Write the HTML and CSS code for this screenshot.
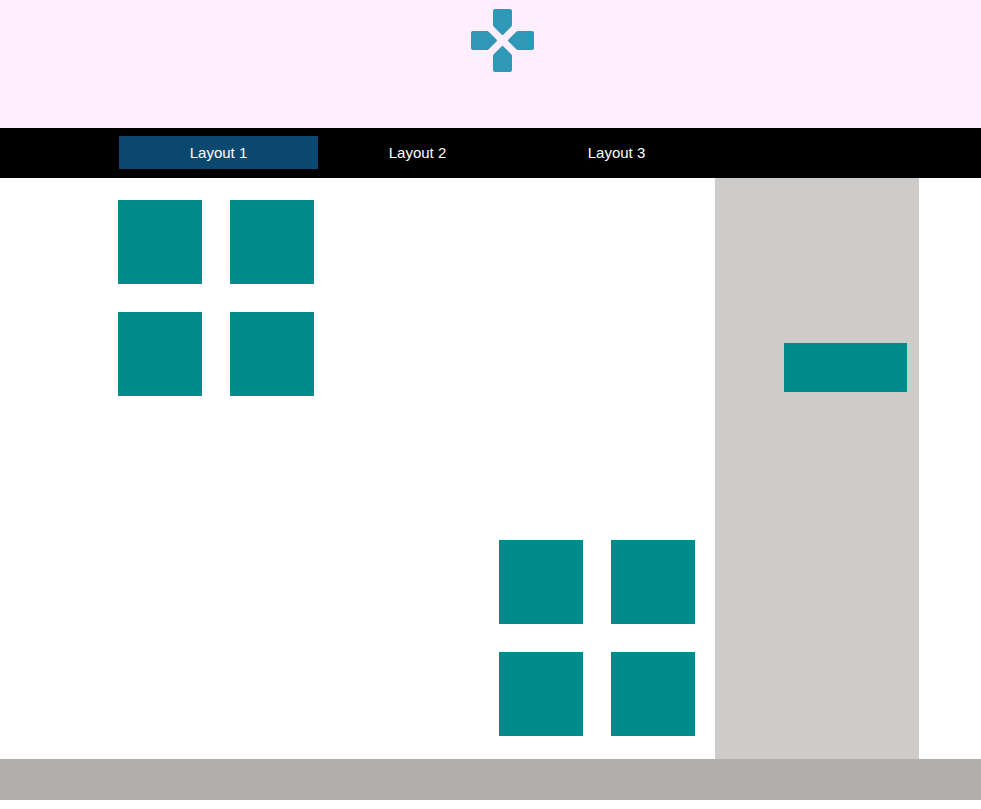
FILE: index.html
```html
<!DOCTYPE html>
<html lang="en">
<head>
  <meta charset="utf-8">
  <title>Layout 1</title>
  <link rel="stylesheet" href="styles.css">
</head>
<body>
  <header class="header">
    <svg class="logo" viewBox="0 0 63 63" role="img" aria-label="Gamepad">
      <g id="pad">
        <path d="M24 0h15q2 0 2 2v14q0 1-1 2l-7.500 7.500q-1 1-2 0L23 18q-1-1-1-2V2q0-2 2-2z"/>
        <path transform="rotate(90 31.500 31.500)" d="M24 0h15q2 0 2 2v14q0 1-1 2l-7.500 7.500q-1 1-2 0L23 18q-1-1-1-2V2q0-2 2-2z"/>
        <path transform="rotate(180 31.500 31.500)" d="M24 0h15q2 0 2 2v14q0 1-1 2l-7.500 7.500q-1 1-2 0L23 18q-1-1-1-2V2q0-2 2-2z"/>
        <path transform="rotate(270 31.500 31.500)" d="M24 0h15q2 0 2 2v14q0 1-1 2l-7.500 7.500q-1 1-2 0L23 18q-1-1-1-2V2q0-2 2-2z"/>
      </g>
    </svg>
  </header>
  <nav class="nav">
    <a class="nav-link active" href="#layout1">Layout 1</a>
    <a class="nav-link" href="#layout2">Layout 2</a>
    <a class="nav-link" href="#layout3">Layout 3</a>
  </nav>
  <div class="page">
    <main class="main">
      <div class="tiles">
        <div class="tile"></div>
        <div class="tile"></div>
        <div class="tile"></div>
        <div class="tile"></div>
      </div>
      <div class="tiles tiles-end">
        <div class="tile"></div>
        <div class="tile"></div>
        <div class="tile"></div>
        <div class="tile"></div>
      </div>
    </main>
    <aside class="sidebar">
      <div class="banner"></div>
    </aside>
  </div>
  <footer class="footer"></footer>
</body>
</html>
```
FILE: styles.css
```css
* {
  box-sizing: border-box;
}

body {
  margin: 0;
  background: #fff;
  font-family: "Liberation Sans", Arial, sans-serif;
  font-size: 15px;
}

.header {
  display: flex;
  justify-content: center;
  align-items: flex-start;
  min-height: 128px;
  padding: 9px 0 0 24px;
  background: #ffeeff;
}

.logo {
  width: 63px;
  height: 63px;
  fill: #2f98b6;
}

.nav {
  display: flex;
  padding: 8px 62px 9px 119px;
  background: #000;
}

.nav-link {
  flex: 0 1 199px;
  padding: 8px 0;
  color: #fff;
  line-height: 17px;
  text-align: center;
  text-decoration: none;
}

.nav-link.active {
  background: #0a4870;
}

.page {
  display: flex;
  padding: 0 62px 0 98px;
}

.main {
  flex: 1;
  display: flex;
  flex-direction: column;
  gap: 144px;
  padding: 22px 20px 23px;
}

.tiles {
  display: grid;
  grid-template-columns: repeat(2, 84px);
  gap: 28px;
}

.tiles-end {
  align-self: flex-end;
}

.tile {
  height: 84px;
  background: #008b8b;
}

.sidebar {
  display: flex;
  justify-content: flex-end;
  align-items: flex-start;
  width: 204px;
  padding: 165px 12px 0 0;
  background: #cdccca;
}

.banner {
  width: 123px;
  height: 49px;
  background: #008b8b;
}

.footer {
  height: 41px;
  background: #b2aead;
}
```
